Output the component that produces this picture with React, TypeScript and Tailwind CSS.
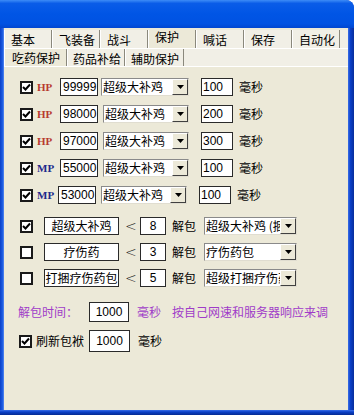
import React from "react";

const CJK = { fontFamily: '"Noto Sans CJK SC", "Liberation Sans", sans-serif' };

function Check({ on }: { on: boolean }) {
  return (
    <div className="w-[13px] h-[13px] shrink-0 border-2 border-[#1a1a1a] bg-white flex items-center justify-center">
      {on && (
        <svg width="9" height="9" viewBox="0 0 9 9">
          <path d="M1 4 L3.5 6.5 L8 1.5" stroke="#000" strokeWidth="2" fill="none" />
        </svg>
      )}
    </div>
  );
}

function Edit({ value, className }: { value: string; className: string }) {
  return (
    <div
      className={`shrink-0 bg-white border border-[#2a2a2a] flex items-center text-[12px] text-black leading-none ${className}`}
      style={{ fontFamily: '"Liberation Sans", Arial, sans-serif' }}
    >
      {value}
    </div>
  );
}

function Combo({ text, className }: { text: string; className: string }) {
  return (
    <div className={`shrink-0 flex bg-white border border-t-[#8a8a8a] border-l-[#8a8a8a] border-r-[#e0ddd0] border-b-[#e0ddd0] overflow-hidden ${className}`}>
      <div className="flex-1 overflow-hidden whitespace-nowrap text-[12px] leading-none pl-[1px] flex items-center text-black" style={CJK}>
        {text}
      </div>
      <div className="w-[16px] shrink-0 bg-[#ece9d8] border border-t-white border-l-white border-r-[#404040] border-b-[#404040] flex items-center justify-center">
        <svg width="7" height="4" viewBox="0 0 7 4">
          <path d="M0 0 H7 L3.5 4 Z" fill="#000" />
        </svg>
      </div>
    </div>
  );
}

const topTabs = ["基本", "飞装备", "战斗", "保护", "喊话", "保存", "自动化"];

const potionRows = [
  { kind: "HP", val: "99999", ms: "100", combo: "ml-[3px] w-[88px]", edit: "ml-[4px]" },
  { kind: "HP", val: "98000", ms: "200", combo: "ml-[5px] w-[86px]", edit: "ml-[4px]" },
  { kind: "HP", val: "97000", ms: "300", combo: "ml-[5px] w-[86px]", edit: "ml-[4px]" },
  { kind: "MP", val: "55000", ms: "100", combo: "ml-[5px] w-[86px]", edit: "ml-[4px]" },
  { kind: "MP", val: "53000", ms: "100", combo: "ml-[5px] w-[86px]", edit: "ml-[2px]" },
];

const unpackRows = [
  { on: true, name: "超级大补鸡", n: "8", combo: "超级大补鸡 (捆)" },
  { on: false, name: "疗伤药", n: "3", combo: "疗伤药包" },
  { on: false, name: "打捆疗伤药包", n: "5", combo: "超级打捆疗伤药包" },
];

export default function App() {
  return (
    <div className="w-[358px] h-[415px] bg-white overflow-hidden">
      <div className="w-[354px] h-[415px] flex flex-col rounded-tr-[8px] overflow-hidden bg-[#0a3fc8]">
        {/* title bar */}
        <div className="h-[28px] shrink-0 bg-[linear-gradient(to_bottom,#3d8cf7_0%,#0a5ce8_12%,#0055e5_50%,#0052e2_85%,#0046d0_100%)]" />

        <div className="flex flex-1">
          <div className="w-[4px] shrink-0 bg-[linear-gradient(to_right,#0a3fc8,#1a5ae0_60%,#5a8af0)]" />
          <div className="flex-1 bg-[#ece9d8] flex flex-col text-black" style={CJK}>
            {/* outer tabs */}
            <div className="flex mt-[2px] h-[18px] bg-[#f1efe6]">
              {topTabs.map((t) => {
                const sel = t === "保护";
                return (
                  <div
                    key={t}
                    className={`w-[48px] shrink-0 border-l border-l-white border-r border-r-[#8a887c] text-[12px] leading-none pl-[6px] flex ${
                      sel ? "items-start pt-[1px] bg-[#ece9d8]" : "items-center pt-[1px]"
                    }`}
                  >
                    {t}
                  </div>
                );
              })}
            </div>
            {/* inner tabs */}
            <div className="flex h-[18px] border-t border-t-white bg-[#f1efe6]">
              {[
                ["吃药保护", "w-[63px]"],
                ["药品补给", "w-[58px]"],
                ["辅助保护", "w-[59px]"],
              ].map(([t, w]) => {
                const sel = t === "吃药保护";
                return (
                  <div
                    key={t}
                    className={`${w} shrink-0 border-l border-l-white border-r border-r-[#8a887c] text-[12px] leading-none flex ${
                      sel ? "items-start pt-[3px] pl-[7px] bg-[#ece9d8]" : "items-center pt-[3px] pl-[5px]"
                    }`}
                  >
                    {t}
                  </div>
                );
              })}
            </div>
            <div className="h-px bg-white" />

            {/* potion rows */}
            <div className="flex flex-col gap-[9px] mt-[11px]">
              {potionRows.map((r, i) => (
                <div key={i} className="flex items-center h-[18px]">
                  <div className="ml-[16px]">
                    <Check on />
                  </div>
                  <div
                    className={`ml-[4px] w-[19px] text-[11px] leading-none ${
                      r.kind === "HP" ? "text-[#b83a30]" : "text-[#1c2a8c]"
                    }`}
                    style={{ fontFamily: '"Liberation Serif", serif', fontWeight: 600 }}
                  >
                    {r.kind}
                  </div>
                  <Edit value={r.val} className={`${r.edit} w-[38px] h-[18px] pl-[2px]`} />
                  <Combo text="超级大补鸡" className={`${r.combo} h-[18px]`} />
                  <Edit value={r.ms} className="ml-[12px] w-[32px] h-[18px] pl-[1px]" />
                  <div className="ml-[6px] text-[12px] leading-none">毫秒</div>
                </div>
              ))}
            </div>

            {/* unpack rows */}
            <div className="flex flex-col gap-[8px] mt-[13px]">
              {unpackRows.map((r, i) => (
                <div key={i} className="flex items-center h-[18px]">
                  <div className="ml-[16px]">
                    <Check on={r.on} />
                  </div>
                  <div className="ml-[11px] w-[75px] h-[18px] shrink-0 bg-white border border-[#2a2a2a] text-[12px] leading-none flex items-center justify-center whitespace-nowrap">
                    {r.name}
                  </div>
                  <div className="ml-[6px] w-[15px] text-[14px] leading-none text-[#222]" style={{ fontFamily: '"DejaVu Sans", sans-serif', fontWeight: 300 }}>
                    &lt;
                  </div>
                  <Edit value={r.n} className="w-[26px] h-[18px] justify-center" />
                  <div className="ml-[6px] text-[12px] leading-none">解包</div>
                  <Combo text={r.combo} className="ml-[8px] w-[93px] h-[18px]" />
                </div>
              ))}
            </div>

            {/* unpack time */}
            <div className="flex items-center h-[20px] mt-[15px] text-[#a03cc8] text-[12px] leading-none">
              <div className="ml-[14px] w-[71px]">解包时间：</div>
              <Edit value="1000" className="w-[40px] h-[20px] justify-center" />
              <div className="ml-[8px]">毫秒</div>
              <div className="ml-[11px]">按自己网速和服务器响应来调</div>
            </div>

            {/* refresh */}
            <div className="flex items-center h-[22px] mt-[8px] text-[12px] leading-none">
              <div className="ml-[15px]">
                <Check on />
              </div>
              <div className="ml-[4px] w-[53px]">刷新包袱</div>
              <Edit value="1000" className="w-[41px] h-[22px] justify-center" />
              <div className="ml-[8px]">毫秒</div>
            </div>
          </div>
          <div className="w-[6px] shrink-0 bg-[linear-gradient(to_right,#3a6ee8,#0a3fc8_40%,#082e9c)]" />
        </div>
        <div className="h-[5px] shrink-0 bg-[linear-gradient(to_bottom,#3a6ee8,#0a3fc8_40%,#062a90)]" />
      </div>
    </div>
  );
}
